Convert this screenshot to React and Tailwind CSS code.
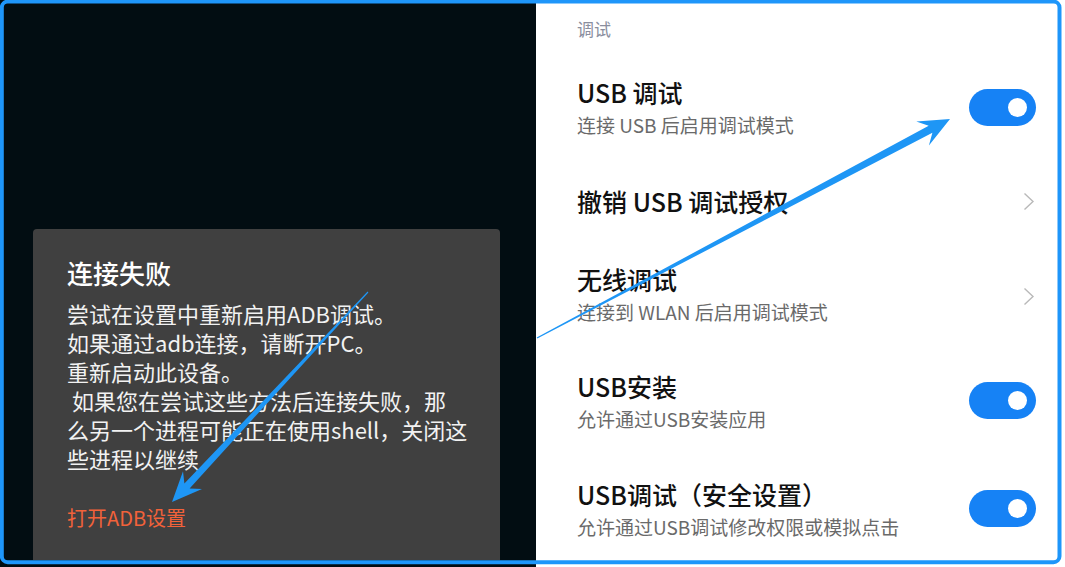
import React from 'react';

const font = "font-['Noto_Sans_CJK_SC','Noto_Sans',sans-serif]";

// tapered annotation arrow: thin tail, wide neck, swept-back head
const arrowPoints = (tail, tip, { neck = 4, head = 13, len = 30, neckLen = 22, tailW = 0.6 } = {}) => {
    const dx = tip[0] - tail[0];
    const dy = tip[1] - tail[1];
    const d = Math.hypot(dx, dy);
    const u = [dx / d, dy / d];
    const n = [-u[1], u[0]];
    const at = (base, along, side) => [
        base[0] + u[0] * along + n[0] * side,
        base[1] + u[1] * along + n[1] * side,
    ];
    const pts = [
        at(tail, 0, tailW),
        at(tip, -neckLen, neck),
        at(tip, -len, head),
        tip,
        at(tip, -len, -head),
        at(tip, -neckLen, -neck),
        at(tail, 0, -tailW),
    ];
    return pts.map((p) => p.map((v) => v.toFixed(1)).join(',')).join(' ');
};

const Toggle = () => (
    <div className="w-[67px] h-[37px] rounded-full bg-[#1682f5] flex items-center justify-end pr-[9px] shrink-0 -mt-[5px]">
        <div className="w-[19px] h-[19px] rounded-full bg-white" />
    </div>
);

const Chevron = () => (
    <svg width="12" height="19" viewBox="0 0 12 19" className="shrink-0 mr-[1px]">
        <polyline points="1.5,1.5 10,9.5 1.5,17.5" fill="none" stroke="#b9b9b9" strokeWidth="1.4" />
    </svg>
);

const Row = ({ title, sub, h, right }) => (
    <div className={`flex items-center justify-between ${h}`}>
        <div className={`flex flex-col ${sub ? 'pb-[5px]' : ''}`}>
            <div className="text-[25px] leading-[32px] font-medium text-[#111]">{title}</div>
            {sub && <div className="text-[19px] leading-[26px] mt-[4px] text-[#6a6a6a]">{sub}</div>}
        </div>
        {right === 'toggle' ? <Toggle /> : <Chevron />}
    </div>
);

const bodyLines = [
    '尝试在设置中重新启用ADB调试。',
    '如果通过adb连接，请断开PC。',
    '重新启动此设备。',
    ' 如果您在尝试这些方法后连接失败，那',
    '么另一个进程可能正在使用shell，关闭这',
    '些进程以继续',
];

export default function App() {
    return (
        <div className={`relative w-[1065px] h-[567px] overflow-hidden flex ${font}`}>
            {/* left: error dialog over dark screen */}
            <div className="w-[536px] h-full bg-[#020d12] pt-[229px] pl-[33px]">
                <div className="w-[467px] h-[331px] bg-[#404040] rounded-t-[4px] pl-[34px] pt-[26px]">
                    <div className="text-[26px] leading-[36px] font-medium text-white">连接失败</div>
                    <div className="mt-[8px] text-[22px] leading-[29px] text-[#f2f2f2]">
                        {bodyLines.map((line) => (
                            <div key={line} className="whitespace-pre">{line}</div>
                        ))}
                    </div>
                    <div className="mt-[31px] text-[20px] leading-[28px] text-[#f2623a]">打开ADB设置</div>
                </div>
            </div>

            {/* right: developer options list */}
            <div className="flex-1 h-full bg-white pl-[41px] pr-[29px]">
                <div className="h-[62px] pt-[17px] text-[17px] leading-[24px] text-[#8a8e9e]">调试</div>
                <Row title="USB 调试" sub="连接 USB 后启用调试模式" h="h-[95px]" right="toggle" />
                <Row title="撤销 USB 调试授权" h="h-[88px]" />
                <Row title="无线调试" sub="连接到 WLAN 后启用调试模式" h="h-[103px]" />
                <Row title="USB安装" sub="允许通过USB安装应用" h="h-[110px]" right="toggle" />
                <Row title="USB调试（安全设置）" sub="允许通过USB调试修改权限或模拟点击" h="h-[106px]" right="toggle" />
            </div>

            {/* annotation layer */}
            <svg className="absolute inset-0 pointer-events-none" width="1065" height="567">
                <rect x="1.8" y="1.6" width="1057.7" height="560.6" rx="6" fill="none" stroke="#1e96fa" strokeWidth="4" />
                <polygon points={arrowPoints([537, 338], [950, 119], { neck: 4, head: 13.5, len: 31 })} fill="#1e96f5" />
                <polygon points={arrowPoints([368, 292], [172, 502], { neck: 3.6, head: 13, len: 30 })} fill="#1e96f5" />
            </svg>
        </div>
    );
}
